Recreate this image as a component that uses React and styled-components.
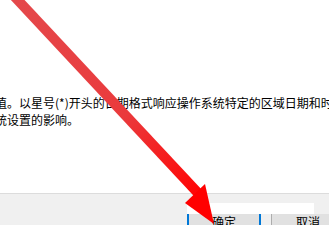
import React from 'react';
import styled, { createGlobalStyle } from 'styled-components';

const GlobalStyle = createGlobalStyle`
  html, body {
    margin: 0;
    padding: 0;
    background: #ffffff;
  }
  body {
    width: 329px;
    height: 225px;
    overflow: hidden;
    font-family: "Noto Sans CJK SC", "Noto Sans", sans-serif;
  }
`;

const Dialog = styled.div`
  position: relative;
  width: 329px;
  height: 225px;
  overflow: hidden;
  display: flex;
  flex-direction: column;
  background: #ffffff;
`;

const Content = styled.div`
  flex: none;
  height: 193px;
  padding-top: 94px;
  box-sizing: border-box;
  overflow: hidden;
`;

const Note = styled.p`
  margin: 0 0 0 -5px;
  font-size: 12px;
  line-height: 17px;
  color: #000000;
  white-space: nowrap;
`;

const Footer = styled.div`
  flex: 1;
  min-height: 0;
  overflow: hidden;
  border-top: 1px solid #dcdcdc;
  background: #f0f0f0;
  padding: 9px 0 0 187px;
  display: flex;
  flex-direction: column;
`;

const Strip = styled.div`
  flex: none;
  width: 127px;
  height: 11px;
  background: #ffffff;
`;

const ButtonRow = styled.div`
  flex: none;
  display: flex;
  gap: 10px;
`;

const Button = styled.button`
  flex: none;
  display: flex;
  align-items: flex-start;
  justify-content: center;
  width: 74px;
  height: 24px;
  margin: 0;
  padding: 1px 0 0;
  box-sizing: border-box;
  border: ${(p) => (p.$primary ? '2px solid #0078d7' : '1px solid #adadad')};
  border-top: none;
  background: #e1e1e1;
  font-family: "Noto Sans CJK SC", "Noto Sans", sans-serif;
  font-size: 12px;
  line-height: 14px;
  color: #000000;
`;

const Overlay = styled.svg`
  position: absolute;
  left: 0;
  top: 0;
  width: 329px;
  height: 225px;
  pointer-events: none;
`;

function RedArrow() {
  return (
    <Overlay viewBox="0 0 329 225">
      <defs>
        <linearGradient id="shaft" x1="16" y1="0" x2="197" y2="192" gradientUnits="userSpaceOnUse">
          <stop offset="0" stopColor="#e4484b" />
          <stop offset="0.6" stopColor="#ea3a3c" />
          <stop offset="1" stopColor="#ff0606" />
        </linearGradient>
      </defs>
      <line x1="14" y1="-4" x2="198" y2="193" stroke="url(#shaft)" strokeWidth="10" />
      <polygon points="185,203 205,184 214,224" fill="#ff0000" />
    </Overlay>
  );
}

export default function App() {
  return (
    <Dialog>
      <GlobalStyle />
      <Content>
        <Note>值。以星号(*)开头的日期格式响应操作系统特定的区域日期和时</Note>
        <Note>统设置的影响。</Note>
      </Content>
      <Footer>
        <Strip />
        <ButtonRow>
          <Button $primary>确定</Button>
          <Button>取消</Button>
        </ButtonRow>
      </Footer>
      <RedArrow />
    </Dialog>
  );
}
